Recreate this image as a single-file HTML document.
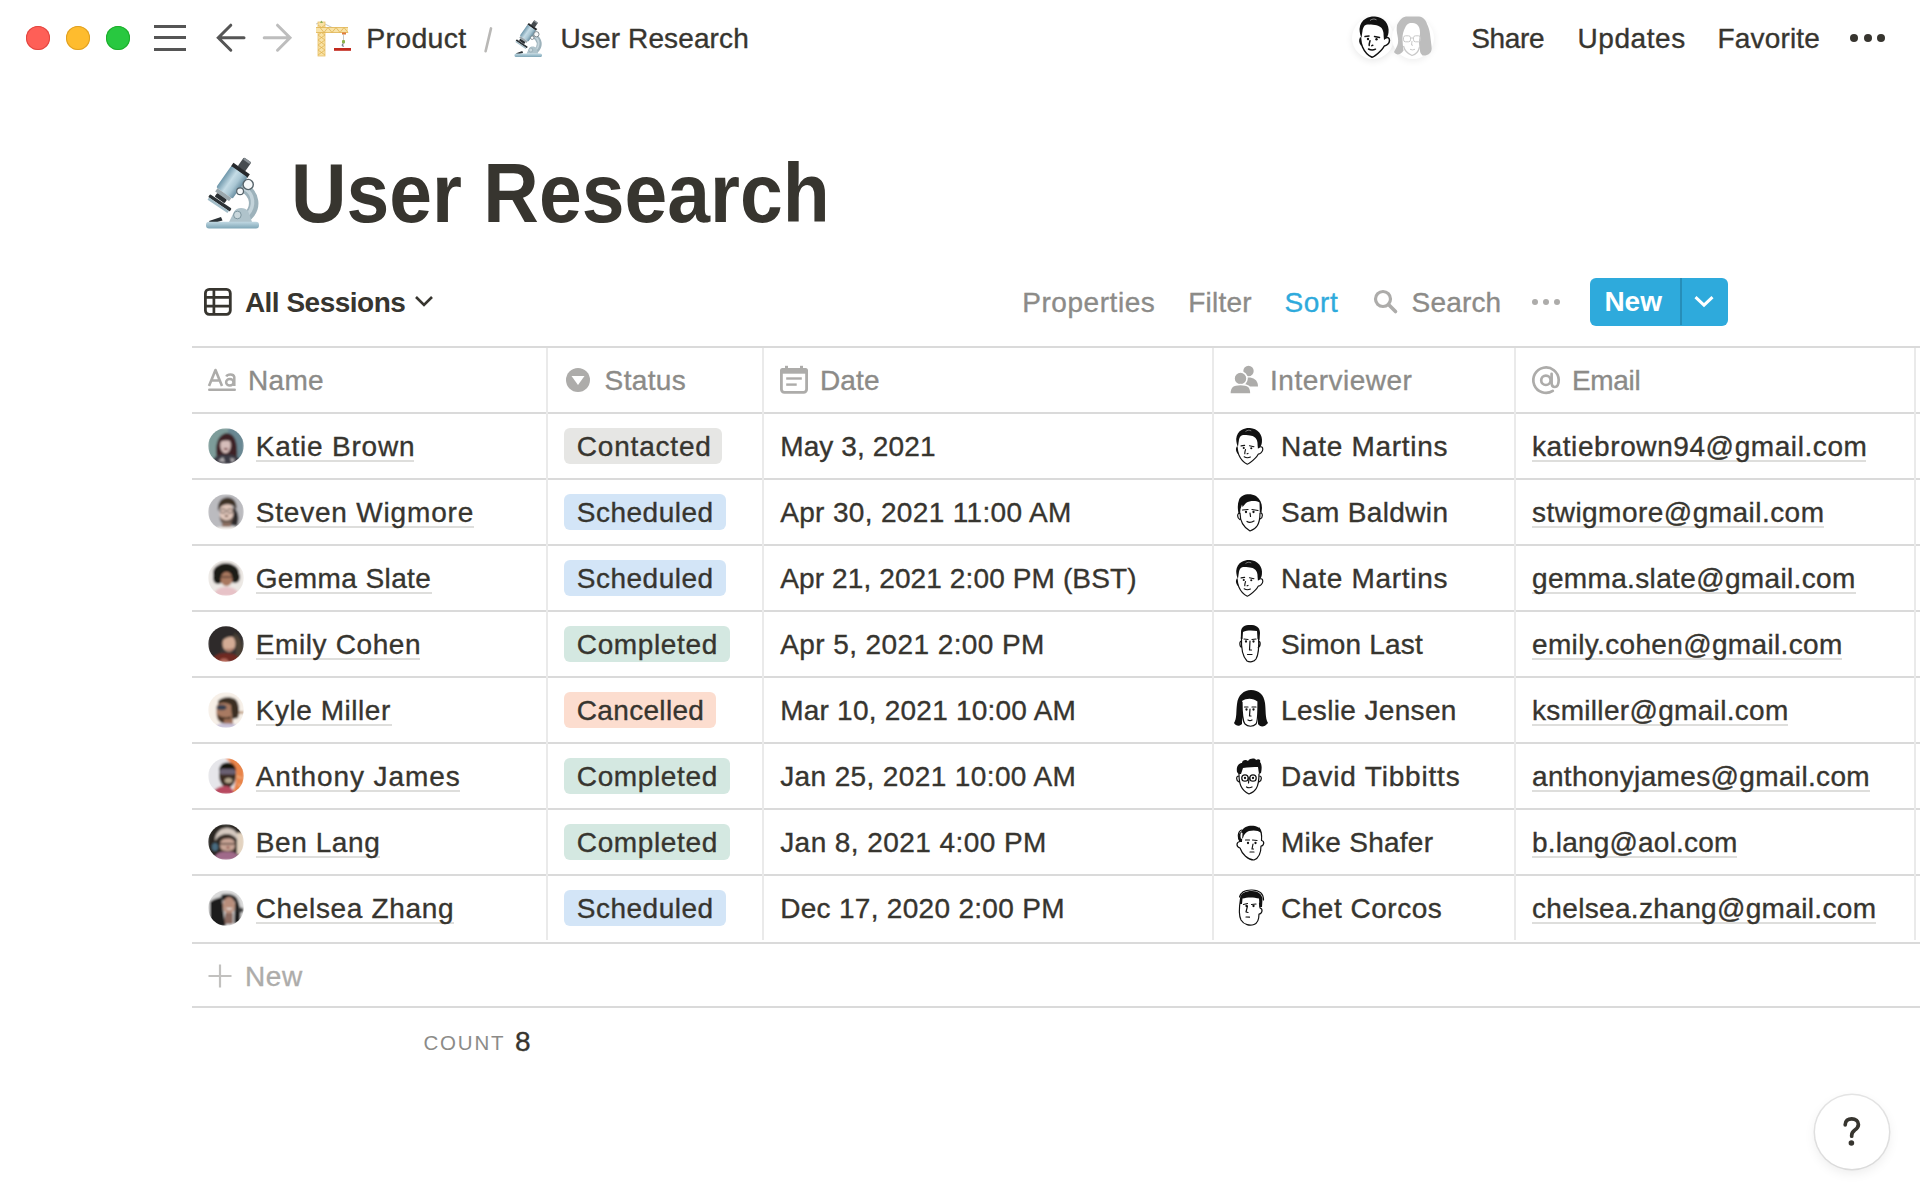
<!DOCTYPE html>
<html><head><meta charset="utf-8">
<style>
html,body{margin:0;padding:0;background:#fff;}
body{width:1920px;height:1200px;position:relative;overflow:hidden;font-family:"Liberation Sans",sans-serif;}
.t{position:absolute;white-space:nowrap;}
.r{position:absolute;}
.av{background:#6b6b6b;}
</style></head><body>
<div class="r" style="left:26px;top:26px;width:24px;height:24px;border-radius:50%;background:#FE5F57;box-shadow:inset 0 0 0 1px #E14640"></div><div class="r" style="left:66px;top:26px;width:24px;height:24px;border-radius:50%;background:#FEBC2E;box-shadow:inset 0 0 0 1px #DFA023"></div><div class="r" style="left:106px;top:26px;width:24px;height:24px;border-radius:50%;background:#28C840;box-shadow:inset 0 0 0 1px #1DAD2B"></div><div class="r" style="left:154px;top:25px;width:32px;height:3px;background:#555555;"></div>
<div class="r" style="left:154px;top:36.3px;width:32px;height:3px;background:#555555;"></div>
<div class="r" style="left:154px;top:48px;width:32px;height:3px;background:#555555;"></div>
<svg class="r" style="left:210px;top:20px" width="90" height="36" viewBox="210 20 90 36">
<path d="M244 37.7 H218.5 M230.8 25.2 L218.3 37.7 L230.8 50.2" fill="none" stroke="#555" stroke-width="3" stroke-linecap="round" stroke-linejoin="miter"/>
<path d="M264.2 37.7 H289.7 M277.5 25.2 L290 37.7 L277.5 50.2" fill="none" stroke="#BDBDBD" stroke-width="3" stroke-linecap="round"/>
</svg><svg class="r" style="left:310px;top:15px" width="46.0" height="46.0" viewBox="0 0 46 46">
<line x1="11" y1="7" x2="25" y2="14" stroke="#9AA3A0" stroke-width="0.6"/>
<line x1="6" y1="9" x2="11" y2="7" stroke="#9AA3A0" stroke-width="0.6"/>
<rect x="8" y="7" width="7" height="34" fill="#F8E2A6"/>
<path d="M8 10 L15 15 M15 10 L8 15 M8 15 L15 20 M15 15 L8 20 M8 20 L15 25 M15 20 L8 25 M8 25 L15 30 M15 25 L8 30 M8 30 L15 35 M15 30 L8 35 M8 35 L15 40 M15 35 L8 40" stroke="#E0B24F" stroke-width="0.8"/>
<rect x="8" y="7" width="7" height="34" fill="none" stroke="#E8C069" stroke-width="0.8"/>
<rect x="6" y="12.5" width="32" height="5" fill="#F8E2A6"/>
<path d="M6 12.5 H38 M6 17.5 H38 M10 12.5 L14 17.5 L18 12.5 L22 17.5 L26 12.5 L30 17.5 L34 12.5 L38 17.5" stroke="#E0B24F" stroke-width="0.8" fill="none"/>
<path d="M10 8 L11.5 5.5 L13 8 Z" fill="#8DAE55"/>
<rect x="32" y="17.5" width="4" height="2" fill="#E07A3A"/>
<line x1="33.5" y1="19" x2="33.5" y2="25" stroke="#B0B8B5" stroke-width="0.7"/>
<rect x="32" y="25" width="3" height="3.5" rx="1" fill="#8DB24A"/>
<path d="M33.5 28.5 C31.5 30 32 31.5 34 31" stroke="#7A8190" stroke-width="1.2" fill="none"/>
<rect x="24" y="33" width="17" height="2.8" fill="#C22A1E"/>
</svg><svg class="r" style="left:514px;top:20px" width="28.0" height="37.3" viewBox="0 0 54 72">
<defs>
<linearGradient id="tubeg514" x1="0" y1="0" x2="1" y2="0">
<stop offset="0" stop-color="#6F97AB"/><stop offset="0.4" stop-color="#C5DCE6"/><stop offset="0.7" stop-color="#A9C6D3"/><stop offset="1" stop-color="#6A8FA2"/>
</linearGradient>
<linearGradient id="baseg514" x1="0" y1="0" x2="0" y2="1">
<stop offset="0" stop-color="#C0D8E2"/><stop offset="1" stop-color="#7DA5B6"/>
</linearGradient>
</defs>
<path d="M39 31 C50 37 52 50 43 59" stroke="#9DB2BB" stroke-width="9.5" fill="none" stroke-linecap="round"/>
<path d="M40 32 C49 37 50 49 43 57" stroke="#C3D3DA" stroke-width="3.5" fill="none" stroke-linecap="round"/>
<path d="M24 65 L29 55 C31 50 40 50 43 54 L47 65 Z" fill="#AFC3CB"/>
<circle cx="32.4" cy="58" r="3.8" fill="#C9D7DC" stroke="#7E96A0" stroke-width="1"/>
<g transform="rotate(34 13.5 47)">
<rect x="1" y="43.5" width="26" height="3.5" rx="1" fill="#2C3236"/>
<rect x="2" y="47" width="24" height="2.5" fill="#A3BDC8"/>
</g>
<path d="M4 64 L16 60 L17.5 63.5 L5.5 67 Z" fill="#2C3236"/>
<rect x="1" y="64.8" width="53" height="6.7" rx="3" fill="url(#baseg514)"/>
<g transform="rotate(35 26.3 26.2)">
<rect x="21.8" y="-2.3" width="9" height="11" rx="1.2" fill="#464C50"/>
<rect x="22.3" y="-2.3" width="8" height="2.4" rx="1" fill="#8A9297"/>
<rect x="16.3" y="8.2" width="20" height="4.5" fill="#26292C"/>
<rect x="16.3" y="12.2" width="20" height="26" rx="1.5" fill="url(#tubeg514)"/>
<rect x="17.8" y="38.2" width="17" height="4" fill="#9AA7AD"/>
<rect x="20.3" y="42.2" width="12" height="4.5" rx="1" fill="#2A2F33"/>
</g>
<circle cx="43.2" cy="27.5" r="5.1" fill="#F6F8F9" stroke="#56636A" stroke-width="1.4"/>
<circle cx="35.1" cy="34.3" r="3.4" fill="#F6F8F9" stroke="#56636A" stroke-width="1.2"/>
</svg><div id="bc_product" class="t " style="left:366.20px;top:20.12px;font-size:28.5px;line-height:36px;font-weight:400;color:#37352F;letter-spacing:0.302px;-webkit-text-stroke:0.35px currentColor;">Product</div>
<svg class="r" style="left:480px;top:24px" width="16" height="32" viewBox="480 24 16 32"><path d="M485.6 51.3 L491 28.4" stroke="#B9B8B6" stroke-width="2.6" stroke-linecap="round"/></svg><div id="bc_ur" class="t " style="left:560.60px;top:20.79px;font-size:28px;line-height:35px;font-weight:400;color:#37352F;letter-spacing:0.117px;-webkit-text-stroke:0.35px currentColor;">User Research</div>
<div id="share" class="t " style="left:1471.20px;top:20.79px;font-size:28px;line-height:35px;font-weight:400;color:#37352F;letter-spacing:-0.350px;-webkit-text-stroke:0.35px currentColor;">Share</div>
<div id="updates" class="t " style="left:1577.40px;top:20.79px;font-size:28px;line-height:35px;font-weight:400;color:#37352F;letter-spacing:0.600px;-webkit-text-stroke:0.35px currentColor;">Updates</div>
<div id="favorite" class="t " style="left:1717.60px;top:20.79px;font-size:28px;line-height:35px;font-weight:400;color:#37352F;letter-spacing:0.142px;-webkit-text-stroke:0.35px currentColor;">Favorite</div>
<div class="r" style="left:1352px;top:16.5px;width:42px;height:42px;border-radius:50%;background:#fff;box-shadow:0 2px 7px rgba(0,0,0,0.09)"></div><div class="r" style="left:1392px;top:16.5px;width:42px;height:42px;border-radius:50%;background:#fff;box-shadow:0 2px 7px rgba(0,0,0,0.07)"></div><svg class="r" style="left:0;top:0;overflow:visible" width="1" height="1">
<g transform="translate(0.000 0.000) scale(1.0)">
<path d="M1360.5 38 C1360.8 42 1361.5 45 1362.5 47 C1364 50.5 1368 55.5 1372 57.3 C1374 56.8 1378 53.5 1381 50.5 C1382.5 49 1383.5 47.5 1384.3 46 C1386.5 45.8 1389.5 43.5 1389.5 40.5 C1389.5 38 1388 37 1385.5 38 M1360.5 38 C1359.5 40 1360 43 1361.5 45 M1365 36.6 L1369 36.1 M1374.5 36.5 L1379.5 37.6 M1370 40.8 C1369.5 42.5 1369 44 1369.2 45.5 M1371.8 45.6 L1372.8 45.2 M1368.5 49 Q1372 51 1375.5 49.2" fill="none" stroke="#111" stroke-width="1.5" stroke-linecap="round" stroke-linejoin="round"/>
<path d="M1359.5 29 C1360 24 1362 20.5 1366 18.5 C1369 16.8 1372 16.3 1375 16.5 C1379 16.7 1383 18.5 1385.5 21.5 C1388 24.5 1389 28.5 1388.5 32.5 C1388.2 35.5 1387 38 1384 40 C1383.8 37 1383.5 35 1383.5 33 C1383 30 1382 28.5 1381 27.5 C1379 25.8 1377 25.2 1375 25 C1372 24.7 1369.5 24.5 1367.5 24.5 C1365.5 24.8 1364.5 25.5 1364 26.5 C1363 28 1362.5 30 1362.5 31 C1362 34 1361.8 36 1361.5 38 C1360.5 36 1359.5 32.5 1359.5 29 Z" fill="#111"/>
<path d="M1370 20.5 C1372 18.8 1374.5 18.6 1376.5 19.8" stroke="#fff" stroke-width="0.7" fill="none" opacity="0.7"/>
<circle cx="1368" cy="39" r="1.2" fill="#111"/><circle cx="1376.5" cy="39.3" r="1.2" fill="#111"/>
</g></svg><svg class="r" style="left:1390px;top:12px" width="46" height="48" viewBox="1390 12 46 48">
<path d="M1397 25 C1400 19 1403 16.5 1407.5 16.5 L1419 16.5 C1423 17 1426 20 1427 24 C1428.5 27 1429.5 30 1430 34 C1430.5 38 1431 42 1431.5 46 C1432 49 1431.5 51.5 1430 53 C1428 55 1425 55.8 1422.5 55.5 C1421 54 1420 52.5 1420 50.5 C1419.5 48 1419 45.5 1419 43 C1419 39 1420 36 1420 33 C1420 29 1419 26 1417 24.5 C1415 23 1412.5 22.8 1410 23 C1407.5 23.5 1406 25.5 1405 28 C1403.5 31 1402.5 34.5 1402.5 38 C1402.5 42 1403 46.5 1403.5 50.5 C1402 53 1399.5 54.5 1397.5 54.5 C1396 54 1394.5 53 1394 52 C1395.5 49 1397.5 46 1398 43 C1398.5 39.5 1397.5 36 1397 33 C1396.6 30 1396.6 27.5 1397 25 Z" fill="#BDBDBD"/>
<path d="M1403.5 46 C1404.5 50 1407 53.5 1412 55.5 C1416 54.5 1418.5 51.5 1419.5 47" fill="none" stroke="#C9C9C9" stroke-width="1.2"/>
<rect x="1403.5" y="35.8" width="7" height="6" rx="2" fill="none" stroke="#CACACA" stroke-width="1"/>
<rect x="1413.5" y="35.8" width="7" height="6" rx="2" fill="none" stroke="#CACACA" stroke-width="1"/>
<path d="M1410.5 38 H1413.5 M1410 49.3 Q1412.5 50.5 1415 49.3 M1412 41 L1411.5 45 L1413 45.3" stroke="#CACACA" stroke-width="1" fill="none"/>
</svg><div class="r" style="left:1850px;top:33.5px;width:8px;height:8px;border-radius:50%;background:#37352F"></div><div class="r" style="left:1863.7px;top:33.5px;width:8px;height:8px;border-radius:50%;background:#37352F"></div><div class="r" style="left:1877.4px;top:33.5px;width:8px;height:8px;border-radius:50%;background:#37352F"></div><div id="title" class="t " style="left:290.70px;top:141.05px;font-size:83.5px;line-height:104px;font-weight:700;color:#37352F;letter-spacing:0.000px;transform-origin:0 0;transform:scaleX(0.921)">User Research</div>
<svg class="r" style="left:205px;top:157px" width="54.0" height="72.0" viewBox="0 0 54 72">
<defs>
<linearGradient id="tubeg205" x1="0" y1="0" x2="1" y2="0">
<stop offset="0" stop-color="#6F97AB"/><stop offset="0.4" stop-color="#C5DCE6"/><stop offset="0.7" stop-color="#A9C6D3"/><stop offset="1" stop-color="#6A8FA2"/>
</linearGradient>
<linearGradient id="baseg205" x1="0" y1="0" x2="0" y2="1">
<stop offset="0" stop-color="#C0D8E2"/><stop offset="1" stop-color="#7DA5B6"/>
</linearGradient>
</defs>
<path d="M39 31 C50 37 52 50 43 59" stroke="#9DB2BB" stroke-width="9.5" fill="none" stroke-linecap="round"/>
<path d="M40 32 C49 37 50 49 43 57" stroke="#C3D3DA" stroke-width="3.5" fill="none" stroke-linecap="round"/>
<path d="M24 65 L29 55 C31 50 40 50 43 54 L47 65 Z" fill="#AFC3CB"/>
<circle cx="32.4" cy="58" r="3.8" fill="#C9D7DC" stroke="#7E96A0" stroke-width="1"/>
<g transform="rotate(34 13.5 47)">
<rect x="1" y="43.5" width="26" height="3.5" rx="1" fill="#2C3236"/>
<rect x="2" y="47" width="24" height="2.5" fill="#A3BDC8"/>
</g>
<path d="M4 64 L16 60 L17.5 63.5 L5.5 67 Z" fill="#2C3236"/>
<rect x="1" y="64.8" width="53" height="6.7" rx="3" fill="url(#baseg205)"/>
<g transform="rotate(35 26.3 26.2)">
<rect x="21.8" y="-2.3" width="9" height="11" rx="1.2" fill="#464C50"/>
<rect x="22.3" y="-2.3" width="8" height="2.4" rx="1" fill="#8A9297"/>
<rect x="16.3" y="8.2" width="20" height="4.5" fill="#26292C"/>
<rect x="16.3" y="12.2" width="20" height="26" rx="1.5" fill="url(#tubeg205)"/>
<rect x="17.8" y="38.2" width="17" height="4" fill="#9AA7AD"/>
<rect x="20.3" y="42.2" width="12" height="4.5" rx="1" fill="#2A2F33"/>
</g>
<circle cx="43.2" cy="27.5" r="5.1" fill="#F6F8F9" stroke="#56636A" stroke-width="1.4"/>
<circle cx="35.1" cy="34.3" r="3.4" fill="#F6F8F9" stroke="#56636A" stroke-width="1.2"/>
</svg><svg class="r" style="left:204px;top:288px" width="28" height="28" viewBox="0 0 28 28">
<rect x="1.4" y="1.4" width="24.9" height="24.9" rx="3.8" fill="none" stroke="#37352F" stroke-width="2.8"/>
<path d="M1.4 9.35H26.3 M1.4 18.2H26.3 M9.9 1.4V26.3" stroke="#37352F" stroke-width="2.7" fill="none"/>
</svg><div id="allsessions" class="t " style="left:244.90px;top:284.79px;font-size:28px;line-height:35px;font-weight:700;color:#37352F;letter-spacing:-0.508px;">All Sessions</div>
<svg class="r" style="left:412px;top:292px" width="24" height="20" viewBox="0 0 24 20">
<path d="M4 5 L12 13 L20 5" fill="none" stroke="#37352F" stroke-width="2.6"/>
</svg><div id="properties" class="t " style="left:1022.20px;top:284.79px;font-size:28px;line-height:35px;font-weight:400;color:#8C8B88;letter-spacing:0.556px;-webkit-text-stroke:0.35px currentColor;">Properties</div>
<div id="filter" class="t " style="left:1188.30px;top:284.79px;font-size:28px;line-height:35px;font-weight:400;color:#8C8B88;letter-spacing:0.200px;-webkit-text-stroke:0.35px currentColor;">Filter</div>
<div id="sort" class="t " style="left:1284.60px;top:284.79px;font-size:28px;line-height:35px;font-weight:400;color:#2EAADC;letter-spacing:0.598px;-webkit-text-stroke:0.35px currentColor;">Sort</div>
<svg class="r" style="left:1372px;top:288px" width="28" height="28" viewBox="0 0 28 28">
<circle cx="11" cy="11" r="7.5" fill="none" stroke="#ADACAA" stroke-width="3.2"/>
<path d="M16.5 16.5 L23.5 23.5" stroke="#ADACAA" stroke-width="3.6" stroke-linecap="round"/>
</svg><div id="search" class="t " style="left:1411.60px;top:284.79px;font-size:28px;line-height:35px;font-weight:400;color:#8C8B88;letter-spacing:0.160px;-webkit-text-stroke:0.35px currentColor;">Search</div>
<div class="r" style="left:1531.8px;top:298.7px;width:6px;height:6px;border-radius:50%;background:#ADACAA"></div><div class="r" style="left:1543px;top:298.7px;width:6px;height:6px;border-radius:50%;background:#ADACAA"></div><div class="r" style="left:1554.2px;top:298.7px;width:6px;height:6px;border-radius:50%;background:#ADACAA"></div><div class="r" style="left:1590px;top:278px;width:138px;height:47.5px;border-radius:6px;background:#2EAADC"></div><div class="r" style="left:1680px;top:278px;width:1.5px;height:47px;background:rgba(0,0,0,0.16);"></div>
<div id="newbtn" class="t " style="left:1604.40px;top:284.29px;font-size:28px;line-height:35px;font-weight:700;color:#FFFFFF;letter-spacing:0.000px;">New</div>
<svg class="r" style="left:1692px;top:292px" width="24" height="20" viewBox="0 0 24 20">
<path d="M3.5 5.2 L12 13.2 L20.5 5.2" fill="none" stroke="#FFFFFF" stroke-width="3"/>
</svg><div class="r" style="left:192px;top:346px;width:1728px;height:2px;background:#DADADA;"></div>
<div class="r" style="left:192px;top:412px;width:1728px;height:2px;background:#DADADA;"></div>
<div class="r" style="left:192px;top:478px;width:1728px;height:2px;background:#DADADA;"></div>
<div class="r" style="left:192px;top:544px;width:1728px;height:2px;background:#DADADA;"></div>
<div class="r" style="left:192px;top:610px;width:1728px;height:2px;background:#DADADA;"></div>
<div class="r" style="left:192px;top:676px;width:1728px;height:2px;background:#DADADA;"></div>
<div class="r" style="left:192px;top:742px;width:1728px;height:2px;background:#DADADA;"></div>
<div class="r" style="left:192px;top:808px;width:1728px;height:2px;background:#DADADA;"></div>
<div class="r" style="left:192px;top:874px;width:1728px;height:2px;background:#DADADA;"></div>
<div class="r" style="left:192px;top:942px;width:1728px;height:2px;background:#DADADA;"></div>
<div class="r" style="left:192px;top:1006px;width:1728px;height:2px;background:#DADADA;"></div>
<div class="r" style="left:546px;top:348px;width:2px;height:592px;background:#EAEAEA;"></div>
<div class="r" style="left:762px;top:348px;width:2px;height:592px;background:#EAEAEA;"></div>
<div class="r" style="left:1212px;top:348px;width:2px;height:592px;background:#EAEAEA;"></div>
<div class="r" style="left:1514px;top:348px;width:2px;height:592px;background:#EAEAEA;"></div>
<div class="r" style="left:1914px;top:348px;width:2px;height:592px;background:#EAEAEA;"></div>
<svg class="r" style="left:204px;top:364px" width="36" height="30" viewBox="204 364 36 30">
<path d="M209 386 L215.5 370 L222 386 M211.3 380.5 H219.7" fill="none" stroke="#ADACAA" stroke-width="2.6" stroke-linejoin="round"/>
<path d="M226.3 376.5 C227.5 374 233.5 373.5 234.3 377 V386" fill="none" stroke="#ADACAA" stroke-width="2.5"/>
<ellipse cx="229.8" cy="382.3" rx="3.7" ry="3.2" fill="none" stroke="#ADACAA" stroke-width="2.5"/>
<rect x="208" y="388.4" width="28" height="2.6" rx="1.3" fill="#ADACAA"/>
</svg><div id="h_name" class="t " style="left:248.10px;top:362.79px;font-size:28px;line-height:35px;font-weight:400;color:#8C8B88;letter-spacing:0.268px;-webkit-text-stroke:0.35px currentColor;">Name</div>
<svg class="r" style="left:566px;top:368px" width="24" height="24" viewBox="0 0 24 24">
<circle cx="12" cy="12" r="12" fill="#ADACAA"/><path d="M5.5 8 H18.5 L12 17 Z" fill="#fff"/>
</svg><div id="h_status" class="t " style="left:604.60px;top:362.79px;font-size:28px;line-height:35px;font-weight:400;color:#8C8B88;letter-spacing:0.360px;-webkit-text-stroke:0.35px currentColor;">Status</div>
<svg class="r" style="left:780px;top:365px" width="28" height="30" viewBox="0 0 28 30">
<rect x="1.4" y="4.3" width="25.2" height="23" rx="3" fill="none" stroke="#ADACAA" stroke-width="2.8"/>
<rect x="0" y="2.9" width="28" height="5.6" rx="2.5" fill="#ADACAA"/><rect x="0" y="5" width="28" height="3.4" fill="#ADACAA"/>
<rect x="5" y="0.8" width="3" height="3" fill="#ADACAA"/><rect x="20" y="0.8" width="3" height="3" fill="#ADACAA"/>
<rect x="6.2" y="12.3" width="15.6" height="2.4" fill="#ADACAA"/><rect x="6.2" y="18.4" width="10.5" height="2.4" fill="#ADACAA"/>
</svg><div id="h_date" class="t " style="left:819.90px;top:362.79px;font-size:28px;line-height:35px;font-weight:400;color:#8C8B88;letter-spacing:0.200px;-webkit-text-stroke:0.35px currentColor;">Date</div>
<svg class="r" style="left:1229px;top:364px" width="32" height="32" viewBox="0 0 32 32">
<circle cx="19.5" cy="7" r="5.2" fill="#ADACAA"/>
<path d="M12 22.5 C12 15 15 13.5 19.5 13.5 C24 13.5 29 15.5 29 22.5 Z" fill="#ADACAA"/>
<circle cx="11.5" cy="14.5" r="6.5" fill="#ADACAA" stroke="#fff" stroke-width="1.6"/>
<path d="M0.8 30 C0.8 22.5 4 20.5 11.5 20.5 C19 20.5 22 22.5 22 30 Z" fill="#ADACAA" stroke="#fff" stroke-width="1.6"/>
</svg><div id="h_interviewer" class="t " style="left:1270.10px;top:362.79px;font-size:28px;line-height:35px;font-weight:400;color:#8C8B88;letter-spacing:0.480px;-webkit-text-stroke:0.35px currentColor;">Interviewer</div>
<svg class="r" style="left:1528px;top:362px" width="36" height="36" viewBox="1528 362 36 36">
<path d="M1551.6 373.8 V382.5 C1551.6 385.8 1553.2 387 1554.9 387 C1557.4 387 1558.7 384 1558.7 379.8 A12.7 12.7 0 1 0 1552.8 390.9" fill="none" stroke="#ADACAA" stroke-width="2.7" stroke-linecap="round"/>
<circle cx="1545.9" cy="380.3" r="4.7" fill="none" stroke="#ADACAA" stroke-width="2.7"/>
</svg><div id="h_email" class="t " style="left:1572.00px;top:362.79px;font-size:28px;line-height:35px;font-weight:400;color:#8C8B88;letter-spacing:-0.350px;-webkit-text-stroke:0.35px currentColor;">Email</div>
<svg class="r" style="left:208px;top:428px" width="36" height="36" viewBox="0 0 36 36">
<defs><clipPath id="pc0"><circle cx="18" cy="18" r="17.8"/></clipPath><filter id="pb0"><feGaussianBlur stdDeviation="0.85"/></filter></defs>
<g clip-path="url(#pc0)"><g filter="url(#pb0)"><rect width="36" height="36" fill="#7D9C9A"/><rect x="20" width="16" height="36" fill="#6A8893"/>
<path d="M9 30 C7 20 8 8 18 5 C27 5 30 14 29 30 Z" fill="#3D2327"/>
<ellipse cx="17.5" cy="17.5" rx="5.3" ry="7.8" fill="#D5BDBA"/>
<path d="M12 11 C15 8 22 8 25 12 L25 14 C21 12 15 12 12 14 Z" fill="#3D2327"/>
<ellipse cx="17.8" cy="21" rx="2.2" ry="1.1" fill="#6A2A30"/>
<path d="M3 36 C5 28 12 26 18 27 C25 26 32 28 34 36 Z" fill="#3A3B44"/>
<path d="M10 33 L15 29 L17 34 Z M22 30 L27 31 L24 35 Z" fill="#B7B3B6"/></g></g>
</svg><div class="r" style="left:256px;top:460px;width:158px;height:2px;background:#DEDEDC;"></div>
<div id="n0" class="t " style="left:255.70px;top:428.79px;font-size:28px;line-height:35px;font-weight:400;color:#37352F;letter-spacing:0.780px;-webkit-text-stroke:0.35px currentColor;">Katie Brown</div>
<div class="r" style="left:564px;top:428px;width:158px;height:36px;background:#E6E6E4;border-radius:6px"></div>
<div id="s0" class="t " style="left:576.80px;top:428.79px;font-size:28px;line-height:35px;font-weight:400;color:#37352F;letter-spacing:0.800px;-webkit-text-stroke:0.35px currentColor;">Contacted</div>
<div id="d0" class="t " style="left:780.20px;top:428.79px;font-size:28px;line-height:35px;font-weight:400;color:#37352F;letter-spacing:0.120px;-webkit-text-stroke:0.35px currentColor;">May 3, 2021</div>
<svg class="r" style="left:0;top:0;overflow:visible" width="1" height="1">
<g transform="translate(30.323 413.365) scale(0.887)">
<path d="M1360.5 38 C1360.8 42 1361.5 45 1362.5 47 C1364 50.5 1368 55.5 1372 57.3 C1374 56.8 1378 53.5 1381 50.5 C1382.5 49 1383.5 47.5 1384.3 46 C1386.5 45.8 1389.5 43.5 1389.5 40.5 C1389.5 38 1388 37 1385.5 38 M1360.5 38 C1359.5 40 1360 43 1361.5 45 M1365 36.6 L1369 36.1 M1374.5 36.5 L1379.5 37.6 M1370 40.8 C1369.5 42.5 1369 44 1369.2 45.5 M1371.8 45.6 L1372.8 45.2 M1368.5 49 Q1372 51 1375.5 49.2" fill="none" stroke="#111" stroke-width="1.3" stroke-linecap="round" stroke-linejoin="round"/>
<path d="M1359.5 29 C1360 24 1362 20.5 1366 18.5 C1369 16.8 1372 16.3 1375 16.5 C1379 16.7 1383 18.5 1385.5 21.5 C1388 24.5 1389 28.5 1388.5 32.5 C1388.2 35.5 1387 38 1384 40 C1383.8 37 1383.5 35 1383.5 33 C1383 30 1382 28.5 1381 27.5 C1379 25.8 1377 25.2 1375 25 C1372 24.7 1369.5 24.5 1367.5 24.5 C1365.5 24.8 1364.5 25.5 1364 26.5 C1363 28 1362.5 30 1362.5 31 C1362 34 1361.8 36 1361.5 38 C1360.5 36 1359.5 32.5 1359.5 29 Z" fill="#111"/>
<path d="M1370 20.5 C1372 18.8 1374.5 18.6 1376.5 19.8" stroke="#fff" stroke-width="0.7" fill="none" opacity="0.7"/>
<circle cx="1368" cy="39" r="1.2" fill="#111"/><circle cx="1376.5" cy="39.3" r="1.2" fill="#111"/>
</g></svg><div id="i0" class="t " style="left:1281.00px;top:428.79px;font-size:28px;line-height:35px;font-weight:400;color:#37352F;letter-spacing:0.712px;-webkit-text-stroke:0.35px currentColor;">Nate Martins</div>
<div class="r" style="left:1532px;top:460px;width:334px;height:2px;background:#DEDEDC;"></div>
<div id="e0" class="t " style="left:1532.00px;top:428.79px;font-size:28px;line-height:35px;font-weight:400;color:#37352F;letter-spacing:0.589px;-webkit-text-stroke:0.35px currentColor;">katiebrown94@gmail.com</div>
<svg class="r" style="left:208px;top:494px" width="36" height="36" viewBox="0 0 36 36">
<defs><clipPath id="pc1"><circle cx="18" cy="18" r="17.8"/></clipPath><filter id="pb1"><feGaussianBlur stdDeviation="0.85"/></filter></defs>
<g clip-path="url(#pc1)"><g filter="url(#pb1)"><rect width="36" height="36" fill="#BBBBBF"/>
<path d="M25 13 C30 16 32 24 29 32 L23 31 Z" fill="#2F2A2C"/>
<ellipse cx="18.5" cy="18.5" rx="7" ry="10" fill="#E2C8BC"/>
<path d="M10 17 C9 8 14 3 20 3.5 C26 4 29 8 28.5 15 L27 14 C24 9 15 9 12 14 Z" fill="#3E3028"/>
<rect x="12.3" y="15.2" width="5.2" height="3.6" rx="1" fill="none" stroke="#4A3E3A" stroke-width="0.9"/>
<rect x="19.5" y="15.2" width="5.2" height="3.6" rx="1" fill="none" stroke="#4A3E3A" stroke-width="0.9"/>
<ellipse cx="18.5" cy="22" rx="1.8" ry="1" fill="#5A3A30"/>
<path d="M11.5 22 C12 30 16 31 18.5 31 C21 31 25 30 25.5 22 C23 27.5 14 27.5 11.5 22 Z" fill="#5C4A3E" opacity="0.85"/>
<rect x="14" y="29" width="9" height="5" fill="#8C6E60"/>
<path d="M3 36 C7 33 13 32.5 18.5 33 C24 32.5 30 33 34 36 Z" fill="#F2EEEA"/></g></g>
</svg><div class="r" style="left:256px;top:526px;width:218px;height:2px;background:#DEDEDC;"></div>
<div id="n1" class="t " style="left:255.70px;top:494.79px;font-size:28px;line-height:35px;font-weight:400;color:#37352F;letter-spacing:0.813px;-webkit-text-stroke:0.35px currentColor;">Steven Wigmore</div>
<div class="r" style="left:564px;top:494px;width:162px;height:36px;background:#D3E5F7;border-radius:6px"></div>
<div id="s1" class="t " style="left:576.80px;top:494.79px;font-size:28px;line-height:35px;font-weight:400;color:#37352F;letter-spacing:0.500px;-webkit-text-stroke:0.35px currentColor;">Scheduled</div>
<div id="d1" class="t " style="left:780.20px;top:494.79px;font-size:28px;line-height:35px;font-weight:400;color:#37352F;letter-spacing:0.340px;-webkit-text-stroke:0.35px currentColor;">Apr 30, 2021 11:00 AM</div>
<svg class="r" style="left:1228px;top:488px;opacity:1.0" width="44.0" height="48.0" viewBox="0 0 44 48">
<path d="M12 25 C12 34 15 39 22 43 C28 41 32 37 32 25 M11.5 25.5 C9 25 9 30 11.8 31.5 M32.5 25 C35 24.5 35 30 32.2 31 M14.5 22 L20 21.5 M24 21.5 L30 22.5 M22 25 L22.5 28.5 M19 33.5 Q22 35.5 26 33" fill="none" stroke="#111" stroke-width="1.2" stroke-linecap="round" stroke-linejoin="round"/>
<path d="M11 12 C13 6 22 5 28 8 C32 11 34 15 34 20 L33.5 24.5 L31.8 24.5 L31.5 14.5 C28 12.5 22 12.5 18 15 L14.5 19 L14 16.5 L12.5 21 L12 25.5 L10.5 25.5 C9.5 20 9.5 16 11 12 Z" fill="#111"/><circle cx="18" cy="24" r="1.15" fill="#111"/><circle cx="25.5" cy="24" r="1.15" fill="#111"/>
</svg><div id="i1" class="t " style="left:1281.00px;top:494.79px;font-size:28px;line-height:35px;font-weight:400;color:#37352F;letter-spacing:0.360px;-webkit-text-stroke:0.35px currentColor;">Sam Baldwin</div>
<div class="r" style="left:1532px;top:526px;width:292px;height:2px;background:#DEDEDC;"></div>
<div id="e1" class="t " style="left:1532.00px;top:494.79px;font-size:28px;line-height:35px;font-weight:400;color:#37352F;letter-spacing:0.466px;-webkit-text-stroke:0.35px currentColor;">stwigmore@gmail.com</div>
<svg class="r" style="left:208px;top:560px" width="36" height="36" viewBox="0 0 36 36">
<defs><clipPath id="pc2"><circle cx="18" cy="18" r="17.8"/></clipPath><filter id="pb2"><feGaussianBlur stdDeviation="0.85"/></filter></defs>
<g clip-path="url(#pc2)"><g filter="url(#pb2)"><rect width="36" height="36" fill="#ECE8E4"/>
<ellipse cx="18" cy="13" rx="13" ry="10" fill="#1E1A18"/>
<ellipse cx="10" cy="18" rx="5" ry="6" fill="#1E1A18"/><ellipse cx="27" cy="17" rx="5" ry="6" fill="#1E1A18"/>
<ellipse cx="18.5" cy="19" rx="6" ry="7.2" fill="#A9785F"/>
<path d="M13 17 H24" stroke="#3A2A22" stroke-width="1"/>
<path d="M5 36 C7 29 12 27 18 27 C24 27 30 29 32 36 Z" fill="#E7C2C7"/></g></g>
</svg><div class="r" style="left:256px;top:592px;width:176px;height:2px;background:#DEDEDC;"></div>
<div id="n2" class="t " style="left:255.70px;top:560.79px;font-size:28px;line-height:35px;font-weight:400;color:#37352F;letter-spacing:0.400px;-webkit-text-stroke:0.35px currentColor;">Gemma Slate</div>
<div class="r" style="left:564px;top:560px;width:162px;height:36px;background:#D3E5F7;border-radius:6px"></div>
<div id="s2" class="t " style="left:576.80px;top:560.79px;font-size:28px;line-height:35px;font-weight:400;color:#37352F;letter-spacing:0.500px;-webkit-text-stroke:0.35px currentColor;">Scheduled</div>
<div id="d2" class="t " style="left:780.20px;top:560.79px;font-size:28px;line-height:35px;font-weight:400;color:#37352F;letter-spacing:0.120px;-webkit-text-stroke:0.35px currentColor;">Apr 21, 2021 2:00 PM (BST)</div>
<svg class="r" style="left:0;top:0;overflow:visible" width="1" height="1">
<g transform="translate(30.323 545.365) scale(0.887)">
<path d="M1360.5 38 C1360.8 42 1361.5 45 1362.5 47 C1364 50.5 1368 55.5 1372 57.3 C1374 56.8 1378 53.5 1381 50.5 C1382.5 49 1383.5 47.5 1384.3 46 C1386.5 45.8 1389.5 43.5 1389.5 40.5 C1389.5 38 1388 37 1385.5 38 M1360.5 38 C1359.5 40 1360 43 1361.5 45 M1365 36.6 L1369 36.1 M1374.5 36.5 L1379.5 37.6 M1370 40.8 C1369.5 42.5 1369 44 1369.2 45.5 M1371.8 45.6 L1372.8 45.2 M1368.5 49 Q1372 51 1375.5 49.2" fill="none" stroke="#111" stroke-width="1.3" stroke-linecap="round" stroke-linejoin="round"/>
<path d="M1359.5 29 C1360 24 1362 20.5 1366 18.5 C1369 16.8 1372 16.3 1375 16.5 C1379 16.7 1383 18.5 1385.5 21.5 C1388 24.5 1389 28.5 1388.5 32.5 C1388.2 35.5 1387 38 1384 40 C1383.8 37 1383.5 35 1383.5 33 C1383 30 1382 28.5 1381 27.5 C1379 25.8 1377 25.2 1375 25 C1372 24.7 1369.5 24.5 1367.5 24.5 C1365.5 24.8 1364.5 25.5 1364 26.5 C1363 28 1362.5 30 1362.5 31 C1362 34 1361.8 36 1361.5 38 C1360.5 36 1359.5 32.5 1359.5 29 Z" fill="#111"/>
<path d="M1370 20.5 C1372 18.8 1374.5 18.6 1376.5 19.8" stroke="#fff" stroke-width="0.7" fill="none" opacity="0.7"/>
<circle cx="1368" cy="39" r="1.2" fill="#111"/><circle cx="1376.5" cy="39.3" r="1.2" fill="#111"/>
</g></svg><div id="i2" class="t " style="left:1281.00px;top:560.79px;font-size:28px;line-height:35px;font-weight:400;color:#37352F;letter-spacing:0.712px;-webkit-text-stroke:0.35px currentColor;">Nate Martins</div>
<div class="r" style="left:1532px;top:592px;width:324px;height:2px;background:#DEDEDC;"></div>
<div id="e2" class="t " style="left:1532.00px;top:560.79px;font-size:28px;line-height:35px;font-weight:400;color:#37352F;letter-spacing:0.350px;-webkit-text-stroke:0.35px currentColor;">gemma.slate@gmail.com</div>
<svg class="r" style="left:208px;top:626px" width="36" height="36" viewBox="0 0 36 36">
<defs><clipPath id="pc3"><circle cx="18" cy="18" r="17.8"/></clipPath><filter id="pb3"><feGaussianBlur stdDeviation="0.85"/></filter></defs>
<g clip-path="url(#pc3)"><g filter="url(#pb3)"><rect width="36" height="36" fill="#353230"/>
<ellipse cx="19" cy="3" rx="15" ry="7" fill="#2E2C2B"/>
<path d="M0 0 H20 C16 6 13 12 13 20 C13 26 11 30 9 36 H0 Z" fill="#2E2C2B"/>
<path d="M26 7 C32 10 35 19 34 30 L28 32 C28 24 28 15 26 7 Z" fill="#4E4234"/>
<ellipse cx="21" cy="17.5" rx="6.5" ry="8.3" fill="#D3AC95"/>
<path d="M14 9 C18 6 24 7 27 11 C23 10 18 11 15 14 Z" fill="#2E2C2B"/>
<path d="M18 23 Q21.5 25 25 22.5" stroke="#9A6252" stroke-width="1.1" fill="none"/>
<path d="M3 36 C5 30 10 27 18 27 C26 27 31 30 33 36 Z" fill="#702A24"/>
<ellipse cx="16" cy="35" rx="4" ry="2.5" fill="#B86A5C"/></g></g>
</svg><div class="r" style="left:256px;top:658px;width:164px;height:2px;background:#DEDEDC;"></div>
<div id="n3" class="t " style="left:255.70px;top:626.79px;font-size:28px;line-height:35px;font-weight:400;color:#37352F;letter-spacing:0.620px;-webkit-text-stroke:0.35px currentColor;">Emily Cohen</div>
<div class="r" style="left:564px;top:626px;width:166px;height:36px;background:#D4E8E1;border-radius:6px"></div>
<div id="s3" class="t " style="left:576.80px;top:626.79px;font-size:28px;line-height:35px;font-weight:400;color:#37352F;letter-spacing:0.625px;-webkit-text-stroke:0.35px currentColor;">Completed</div>
<div id="d3" class="t " style="left:780.20px;top:626.79px;font-size:28px;line-height:35px;font-weight:400;color:#37352F;letter-spacing:0.410px;-webkit-text-stroke:0.35px currentColor;">Apr 5, 2021 2:00 PM</div>
<svg class="r" style="left:1228px;top:620px;opacity:1.0" width="44.0" height="48.0" viewBox="0 0 44 48">
<path d="M13.5 17 C13 28 14 36 19 41 C22 42.5 26 42 28 39 C31 34 31 25 30.5 17 M13.5 21 C11 21 11.5 27 13.8 27.5 M30.5 21 C33 21 32.5 27 30.2 27.5 M16 19 L20 19.5 M24 19.5 L28 19 M22 21 L21.5 30 L23.5 30 M19.5 34.5 L24 34.5" fill="none" stroke="#111" stroke-width="1.2" stroke-linecap="round" stroke-linejoin="round"/>
<path d="M13 12 C13 6 18 4.5 24 5 C30 5.5 32 9 32 13 L31.5 20 L29.5 19 L29 11 C25 10.5 19 10 15 12 L14.5 19 L12.8 19 Z" fill="#111"/><circle cx="18" cy="21.5" r="1.15" fill="#111"/><circle cx="25.5" cy="21.5" r="1.15" fill="#111"/>
</svg><div id="i3" class="t " style="left:1281.00px;top:626.79px;font-size:28px;line-height:35px;font-weight:400;color:#37352F;letter-spacing:0.180px;-webkit-text-stroke:0.35px currentColor;">Simon Last</div>
<div class="r" style="left:1532px;top:658px;width:310px;height:2px;background:#DEDEDC;"></div>
<div id="e3" class="t " style="left:1532.00px;top:626.79px;font-size:28px;line-height:35px;font-weight:400;color:#37352F;letter-spacing:0.350px;-webkit-text-stroke:0.35px currentColor;">emily.cohen@gmail.com</div>
<svg class="r" style="left:208px;top:692px" width="36" height="36" viewBox="0 0 36 36">
<defs><clipPath id="pc4"><circle cx="18" cy="18" r="17.8"/></clipPath><filter id="pb4"><feGaussianBlur stdDeviation="0.85"/></filter></defs>
<g clip-path="url(#pc4)"><g filter="url(#pb4)"><rect width="36" height="36" fill="#F7F0E8"/>
<rect x="29" y="19.5" width="7" height="2" fill="#B08A6A"/>
<path d="M10 9 C13 5 22 4 27 7 C31 10 32 18 30 26 L24 27 L22 14 C17 12 13 12 10 14 Z" fill="#3A2E22"/>
<path d="M9 13 C8 19 8 24 10 28 C13 31 18 32 22 30 L24 26 L23 13 C18 10 12 10 9 13 Z" fill="#A87A62"/>
<ellipse cx="13.5" cy="15.5" rx="5" ry="2.8" fill="#384050"/>
<path d="M9 22 C9 28 12 31 16 31.5 C20 31 23 29 23 24 C20 26 13 26 9 22 Z" fill="#4A3426"/>
<rect x="16" y="27" width="9" height="7" fill="#9C6E56"/>
<path d="M6 36 C8 32 13 31 19 31.5 C25 31 29 32 31 36 Z" fill="#C9C2D9"/></g></g>
</svg><div class="r" style="left:256px;top:724px;width:136px;height:2px;background:#DEDEDC;"></div>
<div id="n4" class="t " style="left:255.70px;top:692.79px;font-size:28px;line-height:35px;font-weight:400;color:#37352F;letter-spacing:0.540px;-webkit-text-stroke:0.35px currentColor;">Kyle Miller</div>
<div class="r" style="left:564px;top:692px;width:152px;height:36px;background:#FCDDCF;border-radius:6px"></div>
<div id="s4" class="t " style="left:576.80px;top:692.79px;font-size:28px;line-height:35px;font-weight:400;color:#37352F;letter-spacing:0.325px;-webkit-text-stroke:0.35px currentColor;">Cancelled</div>
<div id="d4" class="t " style="left:780.20px;top:692.79px;font-size:28px;line-height:35px;font-weight:400;color:#37352F;letter-spacing:0.230px;-webkit-text-stroke:0.35px currentColor;">Mar 10, 2021 10:00 AM</div>
<svg class="r" style="left:1228px;top:686px;opacity:1.0" width="44.0" height="48.0" viewBox="0 0 44 48">
<path d="M14 16 C14 26 14 34 17 38 C20 41 25 41 28 38 C30 35 30 26 30 16 M16.5 21 L20 21 M24 21 L28 21 M22 23 L21.5 30 L23 30 M20 34 Q22 35.2 24 34" fill="none" stroke="#111" stroke-width="1.2" stroke-linecap="round" stroke-linejoin="round"/>
<path d="M6 37 C9 33 8 25 9 18 C10 9 16 4 23 4 C31 4 36 9 37 17 C38 24 37 32 40 37 C36 42 32 41 30 38 L30 16 C25 12 19 12 14 15 L14 38 C11 41 8 40 6 37 Z" fill="#111"/><circle cx="18.5" cy="23.5" r="1.15" fill="#111"/><circle cx="25.5" cy="23.5" r="1.15" fill="#111"/>
</svg><div id="i4" class="t " style="left:1281.00px;top:692.79px;font-size:28px;line-height:35px;font-weight:400;color:#37352F;letter-spacing:0.349px;-webkit-text-stroke:0.35px currentColor;">Leslie Jensen</div>
<div class="r" style="left:1532px;top:724px;width:256px;height:2px;background:#DEDEDC;"></div>
<div id="e4" class="t " style="left:1532.00px;top:692.79px;font-size:28px;line-height:35px;font-weight:400;color:#37352F;letter-spacing:0.319px;-webkit-text-stroke:0.35px currentColor;">ksmiller@gmail.com</div>
<svg class="r" style="left:208px;top:758px" width="36" height="36" viewBox="0 0 36 36">
<defs><clipPath id="pc5"><circle cx="18" cy="18" r="17.8"/></clipPath><filter id="pb5"><feGaussianBlur stdDeviation="0.85"/></filter></defs>
<g clip-path="url(#pc5)"><g filter="url(#pb5)"><rect width="36" height="36" fill="#E6E6EA"/>
<path d="M17 0 H36 V36 H24 C26 30 29 22 28 14 C27 8 22 4 17 0 Z" fill="#E8844A"/>
<path d="M27 18 L34 20 M30 26 L35 30" stroke="#F0B080" stroke-width="1.5"/>
<ellipse cx="19.5" cy="17.5" rx="8.5" ry="12" fill="#3A2A22"/>
<path d="M11 13 C11 7 15 4.5 19.5 4.5 C24 4.5 28 7 28 13 C24 11 15 11 11 13 Z" fill="#161210"/>
<rect x="11.5" y="11" width="16" height="5.5" rx="2.5" fill="#6A6072"/>
<ellipse cx="20.5" cy="22.5" rx="3.8" ry="2.5" fill="#B8A88E"/>
<path d="M4 36 C6 31 11 28 17 28 C22 28 25 30 26 36 Z" fill="#B84860"/></g></g>
</svg><div class="r" style="left:256px;top:790px;width:204px;height:2px;background:#DEDEDC;"></div>
<div id="n5" class="t " style="left:255.70px;top:758.79px;font-size:28px;line-height:35px;font-weight:400;color:#37352F;letter-spacing:0.917px;-webkit-text-stroke:0.35px currentColor;">Anthony James</div>
<div class="r" style="left:564px;top:758px;width:166px;height:36px;background:#D4E8E1;border-radius:6px"></div>
<div id="s5" class="t " style="left:576.80px;top:758.79px;font-size:28px;line-height:35px;font-weight:400;color:#37352F;letter-spacing:0.625px;-webkit-text-stroke:0.35px currentColor;">Completed</div>
<div id="d5" class="t " style="left:780.20px;top:758.79px;font-size:28px;line-height:35px;font-weight:400;color:#37352F;letter-spacing:0.380px;-webkit-text-stroke:0.35px currentColor;">Jan 25, 2021 10:00 AM</div>
<svg class="r" style="left:1228px;top:752px;opacity:1.0" width="44.0" height="48.0" viewBox="0 0 44 48">
<path d="M11 22 C11 32 13 38 21 42 C27 40 31 36 31 22 M10.5 24 C8 24 8 29 11 30 M31.5 24 C34 24 34 29 31 30 M20.2 26 L21.8 26 M21 27 L20.5 31 M18.5 35 Q21 36.5 24 35" fill="none" stroke="#111" stroke-width="1.2" stroke-linecap="round" stroke-linejoin="round"/>
<path d="M9 20 C8 14 11 11 14 11 C14 8 18 7 20 9 C22 6 27 6 28 8 C31 6 33 8 32 10 C34 12 34 17 33 21 L31 22 L30 15 C26 15 20 15 15 16 L13 22 L10.5 22 Z" fill="#111"/><circle cx="17" cy="26" r="3.2" fill="none" stroke="#111" stroke-width="1.3"/><circle cx="25" cy="26" r="3.2" fill="none" stroke="#111" stroke-width="1.3"/><circle cx="17" cy="26" r="1.15" fill="#111"/><circle cx="25" cy="26" r="1.15" fill="#111"/>
</svg><div id="i5" class="t " style="left:1281.00px;top:758.79px;font-size:28px;line-height:35px;font-weight:400;color:#37352F;letter-spacing:0.816px;-webkit-text-stroke:0.35px currentColor;">David Tibbitts</div>
<div class="r" style="left:1532px;top:790px;width:338px;height:2px;background:#DEDEDC;"></div>
<div id="e5" class="t " style="left:1532.00px;top:758.79px;font-size:28px;line-height:35px;font-weight:400;color:#37352F;letter-spacing:0.350px;-webkit-text-stroke:0.35px currentColor;">anthonyjames@gmail.com</div>
<svg class="r" style="left:208px;top:824px" width="36" height="36" viewBox="0 0 36 36">
<defs><clipPath id="pc6"><circle cx="18" cy="18" r="17.8"/></clipPath><filter id="pb6"><feGaussianBlur stdDeviation="0.85"/></filter></defs>
<g clip-path="url(#pc6)"><g filter="url(#pb6)"><rect width="36" height="36" fill="#2A2622"/>
<path d="M29 9 L36 9 V32 L29 30 Z" fill="#E3D3C0"/>
<ellipse cx="7" cy="23" rx="3" ry="4" fill="#4A6C80"/>
<path d="M7 17 C7 8 13 4 19 4 C26 4 31 9 30 17 C27 12 23 10 19 10 C14 10 10 12 7 17 Z" fill="#D5C9C0"/>
<ellipse cx="19.5" cy="21" rx="7.5" ry="8.5" fill="#C9A596"/>
<path d="M10 17 C11 12 15 10.5 19 10.5 C23 10.5 27 12 28 17 L25 16 C22 14 16 14 13 17 Z" fill="#3A2E28"/>
<path d="M12 19.8 H27" stroke="#3A2A24" stroke-width="1.2"/>
<ellipse cx="20" cy="23.5" rx="1.5" ry="1" fill="#7A3A32"/>
<path d="M12 24 C13 30 17 31 20 31 C23 31 26 30 27 24 C24 28 15 28 12 24 Z" fill="#4A3A30"/>
<path d="M6 36 C7 30 11 27 19 28 C26 27 31 30 32 36 Z" fill="#A06A8A"/></g></g>
</svg><div class="r" style="left:256px;top:856px;width:124px;height:2px;background:#DEDEDC;"></div>
<div id="n6" class="t " style="left:255.70px;top:824.79px;font-size:28px;line-height:35px;font-weight:400;color:#37352F;letter-spacing:0.599px;-webkit-text-stroke:0.35px currentColor;">Ben Lang</div>
<div class="r" style="left:564px;top:824px;width:166px;height:36px;background:#D4E8E1;border-radius:6px"></div>
<div id="s6" class="t " style="left:576.80px;top:824.79px;font-size:28px;line-height:35px;font-weight:400;color:#37352F;letter-spacing:0.625px;-webkit-text-stroke:0.35px currentColor;">Completed</div>
<div id="d6" class="t " style="left:780.20px;top:824.79px;font-size:28px;line-height:35px;font-weight:400;color:#37352F;letter-spacing:0.435px;-webkit-text-stroke:0.35px currentColor;">Jan 8, 2021 4:00 PM</div>
<svg class="r" style="left:1228px;top:818px;opacity:1.0" width="44.0" height="48.0" viewBox="0 0 44 48">
<path d="M13.5 12 C9 14 10 21 12 23.5 C8 24 8 29 12 30 C14 36 20 42 26 42 C31 40 33 35 33 28 C36 28 37 23 33.5 22.5 C34 17 33.5 13 31 10 M17.5 22 L21.5 22 M24.5 22 L29 22.5 M25 26 L24 31 L25.5 31 M22 34 L26 34" fill="none" stroke="#111" stroke-width="1.2" stroke-linecap="round" stroke-linejoin="round"/>
<path d="M13.5 13 C16 8 22 7 27 8 C31 9 33 12 33.5 15 C30 12 25 12 21 13 C18 14 16 16 15 20 L13 21 C12 18 12.5 15 13.5 13 Z M12 14 C10 17 10 21 12 24 L14 24 L14.5 15 Z" fill="#111"/><circle cx="20" cy="25" r="1.15" fill="#111"/><circle cx="27.5" cy="25" r="1.15" fill="#111"/>
</svg><div id="i6" class="t " style="left:1281.00px;top:824.79px;font-size:28px;line-height:35px;font-weight:400;color:#37352F;letter-spacing:0.260px;-webkit-text-stroke:0.35px currentColor;">Mike Shafer</div>
<div class="r" style="left:1532px;top:856px;width:205px;height:2px;background:#DEDEDC;"></div>
<div id="e6" class="t " style="left:1532.00px;top:824.79px;font-size:28px;line-height:35px;font-weight:400;color:#37352F;letter-spacing:0.198px;-webkit-text-stroke:0.35px currentColor;">b.lang@aol.com</div>
<svg class="r" style="left:208px;top:890px" width="36" height="36" viewBox="0 0 36 36">
<defs><clipPath id="pc7"><circle cx="18" cy="18" r="17.8"/></clipPath><filter id="pb7"><feGaussianBlur stdDeviation="0.85"/></filter></defs>
<g clip-path="url(#pc7)"><g filter="url(#pb7)"><rect width="36" height="36" fill="#DADADA"/>
<path d="M13 5 C18 3 25 4 28 7 C32 12 33 22 32 34 L26 34 L27 12 C24 9 18 9 15 11 Z" fill="#1F1C1C"/>
<path d="M2 12 C5 9 10 8 14 7 C15 14 15 22 18 36 L2 36 Z" fill="#1E1B1B"/>
<ellipse cx="21" cy="15.5" rx="6" ry="8.5" fill="#B88E7C"/>
<path d="M17.5 18 Q21.5 21.5 25 18 Z" fill="#EFE4DE"/>
<rect x="17" y="23" width="8" height="11" fill="#8A6A60"/>
<path d="M24 36 L36 36 L36 30 C32 33 28 34 24 34 Z" fill="#F3EEF0"/>
<circle cx="33" cy="20" r="2.6" fill="#3A3A3A"/></g></g>
</svg><div class="r" style="left:256px;top:922px;width:198px;height:2px;background:#DEDEDC;"></div>
<div id="n7" class="t " style="left:255.70px;top:890.79px;font-size:28px;line-height:35px;font-weight:400;color:#37352F;letter-spacing:0.666px;-webkit-text-stroke:0.35px currentColor;">Chelsea Zhang</div>
<div class="r" style="left:564px;top:890px;width:162px;height:36px;background:#D3E5F7;border-radius:6px"></div>
<div id="s7" class="t " style="left:576.80px;top:890.79px;font-size:28px;line-height:35px;font-weight:400;color:#37352F;letter-spacing:0.500px;-webkit-text-stroke:0.35px currentColor;">Scheduled</div>
<div id="d7" class="t " style="left:780.20px;top:890.79px;font-size:28px;line-height:35px;font-weight:400;color:#37352F;letter-spacing:0.297px;-webkit-text-stroke:0.35px currentColor;">Dec 17, 2020 2:00 PM</div>
<svg class="r" style="left:1228px;top:884px;opacity:1.0" width="44.0" height="48.0" viewBox="0 0 44 48">
<path d="M11.5 13 C13 7 18 5.8 24 6 C31 6.2 35.5 9 35.5 16 M12.5 15 C11 24 11 32 13 36 C16 41 22 42 26 40.5 C30 39 31 35 31 30 C34 30 35.5 25 32 24 L31.5 19 M15.5 20.5 L19.5 19.5 M23.5 20.5 L28 20 M19.5 22 L18 28 L20 28.5 M18 33 L21.5 33.2" fill="none" stroke="#111" stroke-width="1.2" stroke-linecap="round" stroke-linejoin="round"/>
<path d="M12 14 C13 9 17 7 24 7 C30 7 34 10 34.5 15 L34 23 L31.5 23 L31 14.5 C26 13 19 13 14.5 14.5 L14 20 L12 20 Z" fill="#111"/><circle cx="18.5" cy="22" r="1.15" fill="#111"/><circle cx="25.5" cy="22" r="1.15" fill="#111"/>
</svg><div id="i7" class="t " style="left:1281.00px;top:890.79px;font-size:28px;line-height:35px;font-weight:400;color:#37352F;letter-spacing:0.520px;-webkit-text-stroke:0.35px currentColor;">Chet Corcos</div>
<div class="r" style="left:1532px;top:922px;width:344px;height:2px;background:#DEDEDC;"></div>
<div id="e7" class="t " style="left:1532.00px;top:890.79px;font-size:28px;line-height:35px;font-weight:400;color:#37352F;letter-spacing:0.336px;-webkit-text-stroke:0.35px currentColor;">chelsea.zhang@gmail.com</div>
<svg class="r" style="left:206px;top:962px" width="28" height="28" viewBox="0 0 28 28">
<path d="M14 2.5V25.5 M2.5 14H25.5" stroke="#C2C1BF" stroke-width="2.2"/>
</svg><div id="newrow" class="t " style="left:244.90px;top:958.79px;font-size:28px;line-height:35px;font-weight:400;color:#ADACAA;letter-spacing:0.700px;-webkit-text-stroke:0.35px currentColor;">New</div>
<div id="count" class="t " style="left:423.50px;top:1029.89px;font-size:20.5px;line-height:26px;font-weight:400;color:#8C8B88;letter-spacing:1.800px;">COUNT</div>
<div id="count8" class="t " style="left:515.10px;top:1024.29px;font-size:28px;line-height:35px;font-weight:400;color:#37352F;letter-spacing:0.000px;-webkit-text-stroke:0.35px currentColor;">8</div>
<div class="r" style="left:1815px;top:1095px;width:74px;height:74px;border-radius:50%;background:#fff;box-shadow:0 0 0 1.5px rgba(15,15,15,0.1),0 4px 12px rgba(15,15,15,0.08)"></div><svg class="r" style="left:1830px;top:1110px" width="40" height="40" viewBox="1830 1110 40 40">
<path d="M1845.2 1124.8 C1845.2 1120.6 1848.1 1118.8 1851.7 1118.8 C1855.6 1118.8 1858.4 1121.1 1858.4 1124.4 C1858.4 1127.4 1856.6 1128.7 1854.6 1130.2 C1852.6 1131.7 1851.7 1132.9 1851.7 1135.3 V1136.2" fill="none" stroke="#37352F" stroke-width="3.7" stroke-linecap="round"/>
<circle cx="1851.4" cy="1143" r="2.8" fill="#37352F"/>
</svg>
</body></html>
